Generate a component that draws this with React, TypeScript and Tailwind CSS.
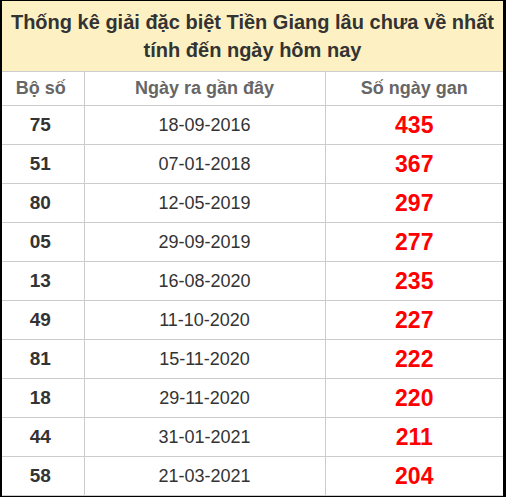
const rows: [string, string, string][] = [
  ['75', '18-09-2016', '435'],
  ['51', '07-01-2018', '367'],
  ['80', '12-05-2019', '297'],
  ['05', '29-09-2019', '277'],
  ['13', '16-08-2020', '235'],
  ['49', '11-10-2020', '227'],
  ['81', '15-11-2020', '222'],
  ['18', '29-11-2020', '220'],
  ['44', '31-01-2021', '211'],
  ['58', '21-03-2021', '204'],
]

export default function App() {
  return (
    <div
      className="w-[506px] h-[497px] bg-black pl-[2px] pt-[1px] pr-[3px] pb-[2px]"
      style={{ fontFamily: '"Liberation Sans", Arial, sans-serif' }}
    >
      <div className="bg-white h-full">
        <div className="h-[70px] bg-[#fdf1c3] flex flex-col items-center justify-center text-[20px] font-bold leading-[28px] text-[#333]">
          <div>Thống kê giải đặc biệt Tiền Giang lâu chưa về nhất</div>
          <div>tính đến ngày hôm nay</div>
        </div>
        <table className="w-full border-collapse table-fixed">
          <colgroup>
            <col className="w-[82px]" />
            <col className="w-[241px]" />
            <col />
          </colgroup>
          <thead>
            <tr className="h-[34px] text-[18px] font-bold text-[#666]">
              <th className="border border-[#ccc] border-l-0 pr-[4px]">Bộ số</th>
              <th className="border border-[#ccc]">Ngày ra gần đây</th>
              <th className="border border-[#ccc] border-r-0">Số ngày gan</th>
            </tr>
          </thead>
          <tbody>
            {rows.map(([num, date, gan]) => (
              <tr key={num} className="h-[39px]">
                <td className="border border-[#ccc] border-l-0 pr-[5px] text-center text-[19px] font-bold text-[#333]">{num}</td>
                <td className="border border-[#ccc] text-center text-[18px] text-[#333]">{date}</td>
                <td className="border border-[#ccc] border-r-0 text-center text-[23px] font-bold text-[#ff0000]">{gan}</td>
              </tr>
            ))}
          </tbody>
        </table>
      </div>
    </div>
  )
}
